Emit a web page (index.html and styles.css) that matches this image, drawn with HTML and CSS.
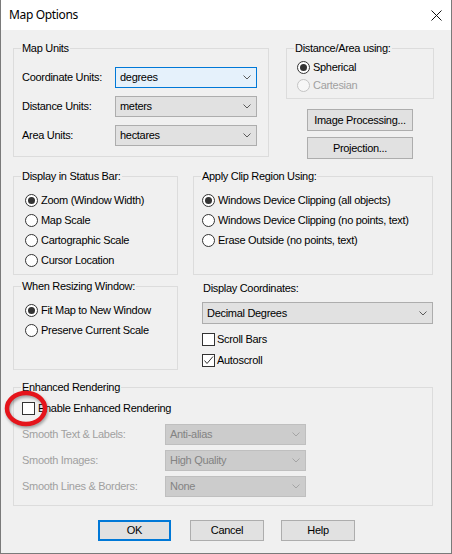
FILE: index.html
```html
<!DOCTYPE html>
<html lang="en">
<head>
<meta charset="utf-8">
<title>Map Options</title>
<link rel="stylesheet" href="styles.css">
</head>
<body>
<div class="window">
  <div class="titlebar">
    <span class="title">Map Options</span>
    <svg class="close" width="11" height="11" viewBox="0 0 11 11" aria-label="Close"><path d="M0.5 0.5L10.5 10.5M10.5 0.5L0.5 10.5" stroke="#111" stroke-width="1"/></svg>
  </div>

  <div class="content">
    <div class="row row-top">
      <div class="group units">
        <span class="group-title">Map Units</span>
        <div class="field">
          <span class="field-label">Coordinate Units:</span>
          <div class="select hot"><span>degrees</span><svg class="chev" width="8" height="5" viewBox="0 0 8 5"><path d="M0.5 0.5L4 4L7.5 0.5" fill="none" stroke="#5a5a5a"/></svg></div>
        </div>
        <div class="field">
          <span class="field-label">Distance Units:</span>
          <div class="select"><span>meters</span><svg class="chev" width="8" height="5" viewBox="0 0 8 5"><path d="M0.5 0.5L4 4L7.5 0.5" fill="none" stroke="#5a5a5a"/></svg></div>
        </div>
        <div class="field">
          <span class="field-label">Area Units:</span>
          <div class="select"><span>hectares</span><svg class="chev" width="8" height="5" viewBox="0 0 8 5"><path d="M0.5 0.5L4 4L7.5 0.5" fill="none" stroke="#5a5a5a"/></svg></div>
        </div>
      </div>

      <div class="side">
        <div class="group dist">
          <span class="group-title">Distance/Area using:</span>
          <div class="option"><span class="radio on"></span>Spherical</div>
          <div class="option disabled"><span class="radio"></span>Cartesian</div>
        </div>
        <button class="btn side-btn first">Image Processing...</button>
        <button class="btn side-btn">Projection...</button>
      </div>
    </div>

    <div class="row row-mid">
      <div class="group status">
        <span class="group-title">Display in Status Bar:</span>
        <div class="option"><span class="radio on"></span>Zoom (Window Width)</div>
        <div class="option"><span class="radio"></span>Map Scale</div>
        <div class="option"><span class="radio"></span>Cartographic Scale</div>
        <div class="option"><span class="radio"></span>Cursor Location</div>
      </div>
      <div class="group clip">
        <span class="group-title">Apply Clip Region Using:</span>
        <div class="option"><span class="radio on"></span>Windows Device Clipping (all objects)</div>
        <div class="option"><span class="radio"></span>Windows Device Clipping (no points, text)</div>
        <div class="option"><span class="radio"></span>Erase Outside (no points, text)</div>
      </div>
    </div>

    <div class="row row-low">
      <div class="group resize">
        <span class="group-title">When Resizing Window:</span>
        <div class="option"><span class="radio on"></span>Fit Map to New Window</div>
        <div class="option"><span class="radio"></span>Preserve Current Scale</div>
      </div>
      <div class="coords">
        <div class="coords-label">Display Coordinates:</div>
        <div class="select tall"><span>Decimal Degrees</span><svg class="chev" width="8" height="5" viewBox="0 0 8 5"><path d="M0.5 0.5L4 4L7.5 0.5" fill="none" stroke="#5a5a5a"/></svg></div>
        <div class="check-row first"><span class="check"></span>Scroll Bars</div>
        <div class="check-row"><span class="check"><svg width="11" height="11" viewBox="0 0 11 11"><path d="M1.5 5.5L4 8.5L10 1.5" fill="none" stroke="#333" stroke-width="1"/></svg></span>Autoscroll</div>
      </div>
    </div>

    <div class="group render">
      <span class="group-title">Enhanced Rendering</span>
      <div class="check-row enable"><span class="check"></span>Enable Enhanced Rendering</div>
      <div class="field off">
        <span class="field-label">Smooth Text &amp; Labels:</span>
        <div class="select dim"><span>Anti-alias</span><svg class="chev" width="8" height="5" viewBox="0 0 8 5"><path d="M0.5 0.5L4 4L7.5 0.5" fill="none" stroke="#a4a4a4"/></svg></div>
      </div>
      <div class="field off">
        <span class="field-label">Smooth Images:</span>
        <div class="select dim"><span>High Quality</span><svg class="chev" width="8" height="5" viewBox="0 0 8 5"><path d="M0.5 0.5L4 4L7.5 0.5" fill="none" stroke="#a4a4a4"/></svg></div>
      </div>
      <div class="field off">
        <span class="field-label">Smooth Lines &amp; Borders:</span>
        <div class="select dim"><span>None</span><svg class="chev" width="8" height="5" viewBox="0 0 8 5"><path d="M0.5 0.5L4 4L7.5 0.5" fill="none" stroke="#a4a4a4"/></svg></div>
      </div>
    </div>

    <div class="actions">
      <button class="btn default">OK</button>
      <button class="btn cancel">Cancel</button>
      <button class="btn help">Help</button>
    </div>
  </div>

  <svg class="marker" width="50" height="44" viewBox="0 0 50 44"><ellipse cx="24" cy="19.5" rx="19" ry="15.5" fill="none" stroke="#e5141b" stroke-width="4.5"/></svg>
</div>
</body>
</html>
```

FILE: styles.css
```css
* { box-sizing: border-box; }

html, body { margin: 0; padding: 0; }

body {
  width: 452px;
  height: 554px;
  overflow: hidden;
  background: #f0f0f0;
  font-family: "Liberation Sans", Arial, sans-serif;
  font-size: 11px;
  letter-spacing: -0.3px;
  line-height: 13px;
  color: #000;
}

.window {
  position: relative;
  width: 452px;
  height: 554px;
  background: #f0f0f0;
  border: 1px solid #7a7a7a;
  border-top: none;
}

/* title bar */
.titlebar {
  height: 30px;
  background: #fff;
  display: flex;
  align-items: center;
  padding: 0 9px 0 8px;
}
.title {
  font-family: "Noto Sans", "Open Sans", sans-serif;
  font-size: 12px;
  letter-spacing: -0.35px;
  color: #000;
  padding-bottom: 1px;
}
.close { margin-left: auto; }

/* body */
.content { padding: 18px 0 0 12px; }

.row { display: flex; align-items: flex-start; }
.row-mid { margin-top: 17px; }
.row-low { margin-top: 7px; }

/* group boxes */
.group {
  position: relative;
  border: 1px solid #dcdcdc;
}
.group-title {
  position: absolute;
  top: -7px;
  left: 7px;
  padding: 0 1px;
  background: #f0f0f0;
  line-height: 13px;
  white-space: nowrap;
}

.units {
  width: 256px;
  height: 109px;
  padding: 18px 11px 10px 8px;
  display: flex;
  flex-direction: column;
  gap: 8px;
}

.field { display: flex; align-items: center; height: 21px; }
.field-label { white-space: nowrap; }
.units .field-label { width: 93px; }

/* drop-down boxes */
.select {
  display: flex;
  align-items: center;
  justify-content: space-between;
  height: 21px;
  padding: 0 5px 0 4px;
  background: #e1e1e1;
  border: 1px solid #adadad;
}
.units .select { width: 142px; }
.select.hot { background: #e5f1fb; border-color: #0078d7; }
.select.tall { height: 22px; }
.select.dim { background: #cccccc; border-color: #bfbfbf; color: #838383; }

/* right column of the top row */
.side {
  width: 148px;
  margin-left: 17px;
  display: flex;
  flex-direction: column;
  align-items: center;
}
.dist {
  width: 148px;
  height: 51px;
  padding: 9px 0 0 10px;
}

.btn {
  font: inherit;
  letter-spacing: inherit;
  color: #000;
  background: #e1e1e1;
  border: 1px solid #adadad;
  padding: 0;
  margin: 0;
  line-height: 13px;
}
.side-btn { width: 106px; height: 22px; margin-top: 6px; }
.side-btn.first { margin-top: 10px; }

/* radio options */
.option {
  display: flex;
  align-items: center;
  height: 20px;
  white-space: nowrap;
}
.dist .option { height: 18px; }
.option.disabled { color: #a0a0a0; }

.radio {
  width: 13px;
  height: 13px;
  flex: none;
  margin-right: 3px;
  border: 1px solid #333;
  border-radius: 50%;
  background: #fff;
  display: flex;
  align-items: center;
  justify-content: center;
}
.radio.on::after {
  content: "";
  width: 7px;
  height: 7px;
  border-radius: 50%;
  background: #333;
}
.disabled .radio { border-color: #c4c4c4; background: #f7f7f7; }

.status {
  width: 165px;
  height: 99px;
  padding: 13px 0 0 11px;
}
.clip {
  width: 240px;
  height: 99px;
  margin-left: 15px;
  padding: 13px 0 0 8px;
}

.resize {
  width: 165px;
  height: 84px;
  margin-top: 4px;
  padding: 13px 0 0 11px;
}

.coords { width: 231px; margin-left: 24px; }
.coords-label { height: 13px; padding-left: 1px; }
.coords .select { margin-top: 7px; }

/* check boxes */
.check-row {
  display: flex;
  align-items: center;
  height: 21px;
  white-space: nowrap;
}
.coords .check-row.first { margin-top: 5px; }
.check {
  width: 13px;
  height: 13px;
  flex: none;
  margin-right: 2px;
  border: 1px solid #333;
  background: #fff;
  display: flex;
  align-items: center;
  justify-content: center;
}

.render {
  width: 420px;
  height: 119px;
  margin-top: 16px;
  padding: 12px 0 0 8px;
}
.check-row.enable { height: 16px; margin-bottom: 8px; }
.check-row.enable .check { margin-right: 3px; }
.render .field { margin-bottom: 5px; }
.render .field-label { width: 143px; }
.render .select { width: 141px; }
.field.off .field-label { color: #a0a0a0; }

/* dialog buttons */
.actions {
  display: flex;
  margin: 14px 0 0 85px;
}
.actions .btn { height: 21px; }
.default { width: 73px; border: 2px solid #0078d7; }
.cancel { width: 74px; margin-left: 19px; }
.help { width: 74px; margin-left: 17px; }

/* red highlight ring over the enable check box */
.marker {
  position: absolute;
  left: 1px;
  top: 389px;
  filter: drop-shadow(1px 2px 1.5px rgba(0, 0, 0, 0.35));
}
```
